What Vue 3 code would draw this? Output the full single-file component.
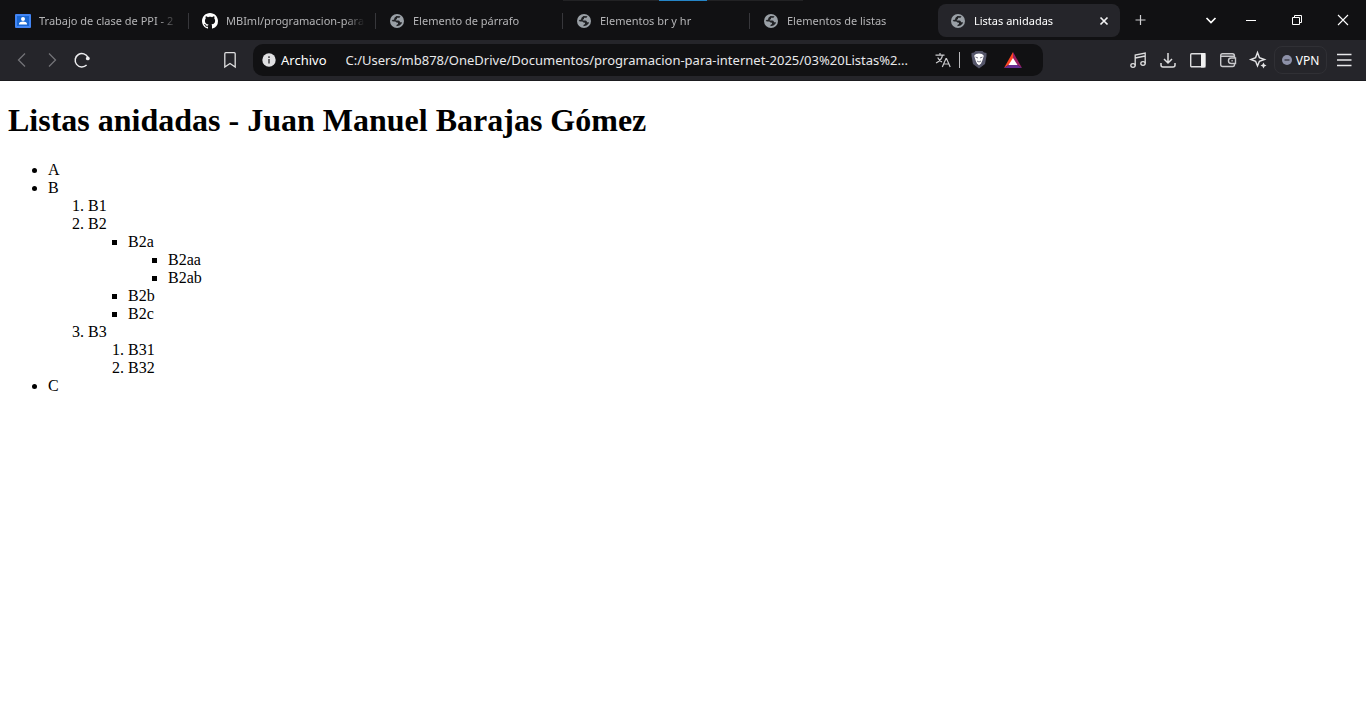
<script setup>
const tabs = [
  { title: 'Trabajo de clase de PPI - 2', icon: 'classroom' },
  { title: 'MBIml/programacion-para', icon: 'github' },
  { title: 'Elemento de párrafo', icon: 'globe' },
  { title: 'Elementos br y hr', icon: 'globe' },
  { title: 'Elementos de listas', icon: 'globe' },
  { title: 'Listas anidadas', icon: 'globe', active: true }
]
const address = 'C:/Users/mb878/OneDrive/Documentos/programacion-para-internet-2025/03%20Listas%2...'
</script>

<template>
  <div class="browser">
    <header>
      <div class="strip">
        <div class="progress"><span></span></div>
        <div class="tabs" role="tablist">
          <div v-for="tab in tabs" :key="tab.title" class="tab" :class="{ active: tab.active }">
            <button class="tab-main" role="tab" :aria-selected="!!tab.active">
              <svg v-if="tab.icon === 'classroom'" width="16" height="16" viewBox="0 0 16 16">
                <rect x="0" y="1" width="16" height="14" rx="1" fill="#4285f4" />
                <rect x="2" y="3" width="12" height="10" fill="#1967d2" />
                <circle cx="8" cy="6" r="2" fill="#fff" />
                <path d="M4 11.5V10.6C4 9.200 6.500 8.500 8 8.500S12 9.200 12 10.600V11.500Z" fill="#fff" />
              </svg>
              <svg v-else-if="tab.icon === 'github'" width="16" height="16" viewBox="0 0 16 16" fill="#fff">
                <path d="M8 0C3.580 0 0 3.580 0 8c0 3.540 2.290 6.530 5.470 7.590.4.070.55-.17.55-.38 0-.19-.01-.82-.01-1.490-2.010.37-2.530-.49-2.690-.94-.09-.23-.48-.94-.82-1.130-.28-.15-.68-.52-.01-.53.63-.01 1.080.58 1.230.82.72 1.210 1.870.87 2.330.66.070-.52.28-.87.510-1.070-1.780-.2-3.640-.89-3.640-3.950 0-.87.31-1.590.82-2.150-.08-.2-.36-1.020.08-2.120 0 0 .67-.21 2.200.82.64-.18 1.320-.27 2-.27s1.360.09 2 .27c1.530-1.040 2.200-.82 2.200-.82.44 1.100.16 1.920.08 2.120.51.56.82 1.270.82 2.150 0 3.070-1.870 3.750-3.650 3.950.29.25.54.73.54 1.480 0 1.070-.01 1.930-.01 2.200 0 .21.15.46.55.38A8.010 8.010 0 0 0 16 8c0-4.420-3.580-8-8-8Z" />
              </svg>
              <svg v-else width="16" height="16" viewBox="0 0 16 16">
                <circle cx="8" cy="8" r="7" fill="#9aa0a6" />
                <path d="M11.500 3.200L10.500 4.800H8V6L6.800 6.800V7.500H9.500Q11 7.800 11 9.300H13L12.500 10.800 10.500 12.600 7.500 13.200V12L9 11V9.800L7.500 9.500 6.300 8.500H4.500L2.600 8 3.700 6.800H5L5.500 4.800 7.500 3Z" fill="#202124" />
              </svg>
              <span class="title">{{ tab.title }}</span>
            </button>
            <button v-if="tab.active" class="close" aria-label="Cerrar pestaña">
              <svg width="16" height="16" viewBox="0 0 16 16"><path d="M4.500 4.500L11.500 11.500M11.500 4.500L4.500 11.500" stroke="#f2f2f3" stroke-width="1.700" /></svg>
            </button>
          </div>
        </div>
        <button class="new" aria-label="Nueva pestaña">
          <svg width="16" height="16" viewBox="0 0 16 16"><path d="M7.500 3V13M2.500 8H12.500" stroke="#d0d0d2" stroke-width="1.200" /></svg>
        </button>
        <div class="window">
          <button class="search" aria-label="Buscar pestañas">
            <svg width="16" height="16" viewBox="0 0 16 16" fill="none"><path d="M3.500 6L8 10.500 12.500 6" stroke="#fff" stroke-width="1.700" /></svg>
          </button>
          <button aria-label="Minimizar">
            <svg width="16" height="16" viewBox="0 0 16 16"><path d="M3 8.500H13" stroke="#fff" /></svg>
          </button>
          <button aria-label="Restaurar">
            <svg width="16" height="16" viewBox="0 0 16 16" fill="none" stroke="#fff"><path d="M3.500 5.500H10.500V12.500H3.500ZM5.500 5.500V3.500H12.500V10.500H10.500" /></svg>
          </button>
          <button aria-label="Cerrar">
            <svg width="16" height="16" viewBox="0 0 16 16"><path d="M3 3L13 13M13 3L3 13" stroke="#fff" stroke-width="1.100" /></svg>
          </button>
        </div>
      </div>

      <div class="toolbar">
        <nav class="nav">
          <button aria-label="Atrás">
            <svg width="20" height="20" viewBox="0 0 20 20" fill="none"><path d="M13 3.500L6.500 10 13 16.500" stroke="#737377" stroke-width="1.300" /></svg>
          </button>
          <button aria-label="Adelante">
            <svg width="20" height="20" viewBox="0 0 20 20" fill="none"><path d="M7 3.500L13.500 10 7 16.500" stroke="#737377" stroke-width="1.300" /></svg>
          </button>
          <button aria-label="Recargar">
            <svg width="20" height="20" viewBox="0 0 20 20" fill="none"><path d="M14.600 15A6.700 6.700 0 1 1 16 7.500" stroke="#ececee" stroke-width="1.500" /><circle cx="15.800" cy="8.400" r="1.900" fill="#ececee" /></svg>
          </button>
          <button class="bookmark" aria-label="Añadir marcador">
            <svg width="20" height="20" viewBox="0 0 20 20" fill="none"><path d="M4.800 3.700Q4.800 2.700 5.800 2.700H14.200Q15.200 2.700 15.200 3.700V17L10 13.500 4.800 17Z" stroke="#dededf" stroke-width="1.300" /></svg>
          </button>
        </nav>

        <div class="omnibox">
          <button class="scheme">
            <svg width="14" height="14" viewBox="0 0 14 14"><circle cx="7" cy="7" r="6.700" fill="#e0e0e2" /><path d="M7 6V10.500M7 3.300V5" stroke="#3b3b3f" stroke-width="1.500" /></svg>
            <span>Archivo</span>
          </button>
          <input class="address" aria-label="Dirección" :value="address" />
          <button class="translate" aria-label="Traducir">
            <svg width="16" height="16" viewBox="0 0 16 16" fill="none" stroke="#c9c9cc" stroke-width="1.200"><path d="M.5 3.200H9.500M5 1V3.200M7.500 3.200C7 6.500 4 9.700 1 11M2.700 5.500C3.500 7.500 5 9 7 10M7.300 15L11 6.500H11.500L15.200 15M8.500 12H14" /></svg>
          </button>
          <span class="rule"></span>
          <button class="shield" aria-label="Brave Shields">
            <svg width="20" height="20" viewBox="0 0 20 20">
              <path d="M6.500 1H13.500L15 2.500 17.500 3V6L16 14 10 18.500 4 14 2.500 6V3L5 2.500Z" fill="#55566a" />
              <path d="M7 4L10 3.500 13 4 14.800 5.800 14 8.500 13.200 11 12 13.500 10 15.300 8 13.500 6.800 11 6 8.500 5.200 5.800Z" fill="#fff" />
              <path d="M6.500 7L9 8M13.500 7L11 8M8 11L10 12 12 11" fill="none" stroke="#55566a" stroke-width=".8" />
            </svg>
          </button>
          <button class="rewards" aria-label="Brave Rewards">
            <svg width="20" height="20" viewBox="0 0 20 20"><path d="M10 2L1 18 10 12Z" fill="#ff4724" /><path d="M10 2L19 18 10 12Z" fill="#9e1f63" /><path d="M1 18H19L10 12Z" fill="#662d91" /><path d="M10 8L5.500 15H14.500Z" fill="#fff" /></svg>
          </button>
        </div>

        <div class="actions">
          <button aria-label="Control multimedia">
            <svg width="20" height="20" viewBox="0 0 20 20" fill="none" stroke="#dededf" stroke-width="1.300"><ellipse cx="5" cy="15.500" rx="2.200" ry="1.800" /><ellipse cx="15" cy="13.500" rx="2.200" ry="1.800" /><path d="M7.200 15.500V5L17.200 3V13.500M7.200 8L17.200 6" /></svg>
          </button>
          <button aria-label="Descargas">
            <svg width="20" height="20" viewBox="0 0 20 20" fill="none" stroke="#dededf" stroke-width="1.500"><path d="M10 3V13M6 9L10 13 14 9M3 13V15Q3 17 5 17H15Q17 17 17 15V13" /></svg>
          </button>
          <button aria-label="Panel lateral">
            <svg width="20" height="20" viewBox="0 0 20 20"><rect x="2.700" y="3.700" width="14" height="13" rx="1" fill="none" stroke="#dededf" stroke-width="1.400" /><path d="M13 3H17.500V17.500H13Z" fill="#f0f0f0" /></svg>
          </button>
          <button aria-label="Cartera">
            <svg width="20" height="20" viewBox="0 0 20 20" fill="none" stroke="#c9c9cc" stroke-width="1.400"><path d="M16.500 8V6Q16.500 3.700 14.500 3.700H4.500Q2.700 3.700 2.700 5.500V14.500Q2.700 16.500 4.700 16.500H14.700Q16.500 16.500 16.500 14.500V13.500M2.700 6.200H16.500M17.500 8H13.200A2.700 2.700 0 0 0 13.200 13.500H17.500ZM13.500 10.700H14.700" /></svg>
          </button>
          <button aria-label="Leo">
            <svg width="20" height="20" viewBox="0 0 20 20" fill="none" stroke="#e4e4e6" stroke-width="1.400"><path d="M9.500 2.500L11.400 7.600 16.500 9.500 11.400 11.300 9.500 16 7.600 11.300 2.800 9.500 7.600 7.600Z" /><path d="M15.500 12.500L16.500 14.500 18.500 15.500 16.500 16.500 15.500 18.500 14.500 16.500 12.500 15.500 14.500 14.500Z" fill="#e4e4e6" stroke="none" /></svg>
          </button>
          <button class="vpn">
            <svg width="10" height="10" viewBox="0 0 10 10"><circle cx="5" cy="5" r="5" fill="#8d91a8" /><path d="M2.500 5H7.500" stroke="#33343f" stroke-width="1.300" /></svg>
            <span>VPN</span>
          </button>
          <button class="menu" aria-label="Menú">
            <svg width="20" height="20" viewBox="0 0 20 20"><path d="M3 4.500H17.500M3 10H17.500M3 15.500H17.500" stroke="#e8e8ea" stroke-width="1.300" /></svg>
          </button>
        </div>
      </div>
    </header>

    <main>
      <h1>Listas anidadas - Juan Manuel Barajas Gómez</h1>
      <ul>
        <li>A</li>
        <li>B
          <ol>
            <li>B1</li>
            <li>B2
              <ul>
                <li>B2a
                  <ul>
                    <li>B2aa</li>
                    <li>B2ab</li>
                  </ul>
                </li>
                <li>B2b</li>
                <li>B2c</li>
              </ul>
            </li>
            <li>B3
              <ol>
                <li>B31</li>
                <li>B32</li>
              </ol>
            </li>
          </ol>
        </li>
        <li>C</li>
      </ul>
    </main>
  </div>
</template>

<style>
body {
  margin: 0;
  background: #fff;
}
</style>

<style scoped>
header {
  font-family: "Noto Sans", "Open Sans", sans-serif;
  color: #fff;
}
button {
  display: flex;
  align-items: center;
  justify-content: center;
  flex: none;
  padding: 0;
  border: 0;
  background: none;
  color: inherit;
  font: inherit;
}
svg {
  display: block;
  flex: none;
}
.strip {
  position: relative;
  display: flex;
  height: 40px;
  padding-left: 3px;
  background: #111113;
}
.progress {
  position: absolute;
  top: 0;
  left: 50%;
  width: 240px;
  height: 1px;
  margin-left: -120px;
  background: #222224;
}
.progress span {
  display: block;
  width: 48px;
  height: 1px;
  margin: 0 auto;
  background: #2585c7;
}
.tabs {
  display: flex;
  flex: 0 1 1117px;
  min-width: 0;
}
.tab {
  display: flex;
  align-items: center;
  flex: 187 1 0;
  min-width: 0;
  height: 33px;
  margin-top: 4px;
  border-radius: 8px;
  color: #b5b5b7;
  font-size: 11px;
}
.tab:not(.active)::after {
  content: "";
  width: 1px;
  height: 16px;
  margin-right: 1px;
  margin-left: 10px;
  background: #37373b;
}
.tab:has(+ .active)::after {
  visibility: hidden;
}
.tab.active {
  flex-grow: 182;
  background: #25252a;
  color: #fff;
}
.close {
  margin-right: 8px;
}
.tab-main {
  flex: 1;
  justify-content: flex-start;
  min-width: 0;
  height: 33px;
  padding-left: 12px;
  gap: 8px;
}
.title {
  flex: 1;
  min-width: 0;
  overflow: hidden;
  text-align: left;
  white-space: nowrap;
  mask-image: linear-gradient(to right, #000 calc(100% - 20px), transparent);
}
.new {
  width: 42px;
}
.window {
  display: flex;
  margin-left: auto;
}
.window button {
  width: 46px;
}
.window .search {
  width: 34px;
}
.toolbar {
  display: flex;
  align-items: center;
  height: 40px;
  border-bottom: 1px solid #1b1b1f;
  background: #25252a;
}
.nav {
  display: flex;
  flex: 0 0 245px;
  padding-left: 7px;
  box-sizing: border-box;
}
.nav button,
.actions button {
  width: 30px;
  height: 32px;
}
.nav .bookmark {
  margin-left: auto;
}
.omnibox {
  display: flex;
  align-items: center;
  flex: 1;
  min-width: 0;
  height: 32px;
  margin-left: 8px;
  padding: 0 20px 0 9px;
  border-radius: 10px;
  background: #111113;
  box-sizing: border-box;
  font-size: 13px;
}
.scheme {
  gap: 5px;
}
.address {
  flex: 1;
  min-width: 0;
  margin-left: 19px;
  padding: 0;
  border: 0;
  outline: 0;
  background: none;
  color: #e8e8ea;
  font: inherit;
}
.translate {
  margin-right: 8px;
}
.rule {
  width: 1px;
  height: 16px;
  margin-right: 9px;
  background: #b9b9bc;
}
.rewards {
  margin-left: 14px;
}
.actions {
  display: flex;
  align-items: center;
  margin-left: 80px;
  padding-right: 7px;
}
.actions .vpn {
  width: 53px;
  height: 28px;
  margin: 0 2px 0 1px;
  gap: 4px;
  border: 1px solid #303035;
  border-radius: 8px;
  font-size: 12px;
}
main {
  padding: 0 8px;
  color: #000;
  font-family: "Liberation Serif", "Times New Roman", serif;
  font-size: 16px;
  line-height: 18px;
}
h1 {
  margin: 0;
  padding: 21px 0 22px;
  font-size: 32px;
  line-height: 37px;
}
ul,
ol {
  margin: 0;
  padding-left: 40px;
}
ol ul {
  list-style-type: square;
}
</style>
